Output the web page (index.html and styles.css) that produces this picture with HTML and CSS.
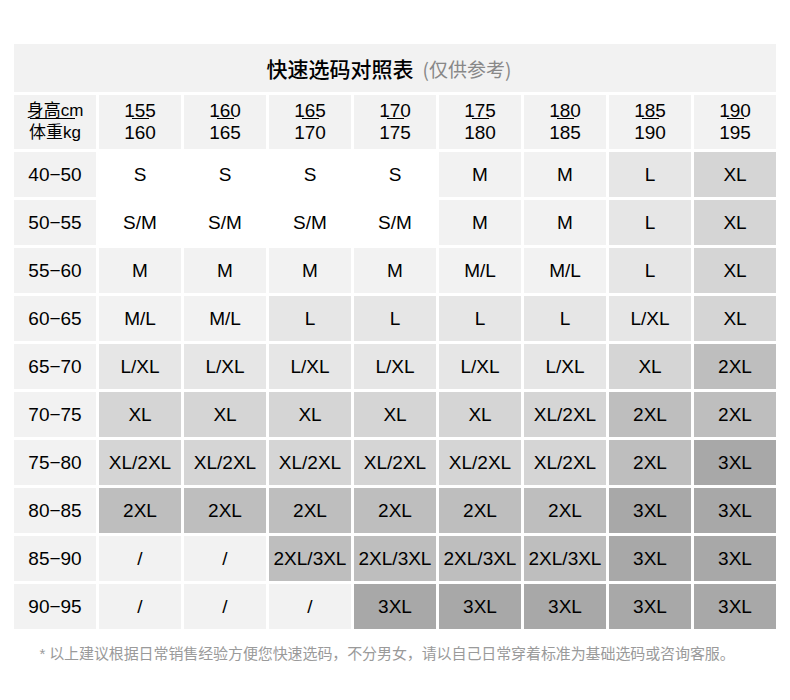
FILE: index.html
```html
<!DOCTYPE html>
<html lang="zh-CN">
<head>
<meta charset="utf-8">
<title>快速选码对照表</title>
<link rel="stylesheet" href="styles.css">
</head>
<body>
<div class="page">
  <div class="chart">
    <div class="title"><span class="title-main">快速选码对照表</span><span class="title-sub">(仅供参考)</span></div>

    <div class="cell c1 head"><div class="top label"><span>身高cm</span></div><div class="bottom label">体重kg</div></div>
    <div class="cell c1 head"><div class="top"><span>155</span></div><div class="bottom">160</div></div>
    <div class="cell c1 head"><div class="top"><span>160</span></div><div class="bottom">165</div></div>
    <div class="cell c1 head"><div class="top"><span>165</span></div><div class="bottom">170</div></div>
    <div class="cell c1 head"><div class="top"><span>170</span></div><div class="bottom">175</div></div>
    <div class="cell c1 head"><div class="top"><span>175</span></div><div class="bottom">180</div></div>
    <div class="cell c1 head"><div class="top"><span>180</span></div><div class="bottom">185</div></div>
    <div class="cell c1 head"><div class="top"><span>185</span></div><div class="bottom">190</div></div>
    <div class="cell c1 head"><div class="top"><span>190</span></div><div class="bottom">195</div></div>

    <div class="cell c1 wt">40−50</div>
    <div class="cell c0">S</div><div class="cell c0">S</div><div class="cell c0">S</div><div class="cell c0">S</div>
    <div class="cell c1">M</div><div class="cell c1">M</div><div class="cell c2">L</div><div class="cell c3">XL</div>

    <div class="cell c1 wt">50−55</div>
    <div class="cell c0">S/M</div><div class="cell c0">S/M</div><div class="cell c0">S/M</div><div class="cell c0">S/M</div>
    <div class="cell c1">M</div><div class="cell c1">M</div><div class="cell c2">L</div><div class="cell c3">XL</div>

    <div class="cell c1 wt">55−60</div>
    <div class="cell c1">M</div><div class="cell c1">M</div><div class="cell c1">M</div><div class="cell c1">M</div>
    <div class="cell c1">M/L</div><div class="cell c1">M/L</div><div class="cell c2">L</div><div class="cell c3">XL</div>

    <div class="cell c1 wt">60−65</div>
    <div class="cell c1">M/L</div><div class="cell c1">M/L</div><div class="cell c2">L</div><div class="cell c2">L</div>
    <div class="cell c2">L</div><div class="cell c2">L</div><div class="cell c2">L/XL</div><div class="cell c3">XL</div>

    <div class="cell c1 wt">65−70</div>
    <div class="cell c2">L/XL</div><div class="cell c2">L/XL</div><div class="cell c2">L/XL</div><div class="cell c2">L/XL</div>
    <div class="cell c2">L/XL</div><div class="cell c2">L/XL</div><div class="cell c3">XL</div><div class="cell c4">2XL</div>

    <div class="cell c1 wt">70−75</div>
    <div class="cell c3">XL</div><div class="cell c3">XL</div><div class="cell c3">XL</div><div class="cell c3">XL</div>
    <div class="cell c3">XL</div><div class="cell c3">XL/2XL</div><div class="cell c4">2XL</div><div class="cell c4">2XL</div>

    <div class="cell c1 wt">75−80</div>
    <div class="cell c3">XL/2XL</div><div class="cell c3">XL/2XL</div><div class="cell c3">XL/2XL</div><div class="cell c3">XL/2XL</div>
    <div class="cell c3">XL/2XL</div><div class="cell c3">XL/2XL</div><div class="cell c4">2XL</div><div class="cell c5">3XL</div>

    <div class="cell c1 wt">80−85</div>
    <div class="cell c4">2XL</div><div class="cell c4">2XL</div><div class="cell c4">2XL</div><div class="cell c4">2XL</div>
    <div class="cell c4">2XL</div><div class="cell c4">2XL</div><div class="cell c5">3XL</div><div class="cell c5">3XL</div>

    <div class="cell c1 wt">85−90</div>
    <div class="cell c1">/</div><div class="cell c1">/</div><div class="cell c4">2XL/3XL</div><div class="cell c4">2XL/3XL</div>
    <div class="cell c4">2XL/3XL</div><div class="cell c4">2XL/3XL</div><div class="cell c5">3XL</div><div class="cell c5">3XL</div>

    <div class="cell c1 wt">90−95</div>
    <div class="cell c1">/</div><div class="cell c1">/</div><div class="cell c1">/</div><div class="cell c5">3XL</div>
    <div class="cell c5">3XL</div><div class="cell c5">3XL</div><div class="cell c5">3XL</div><div class="cell c5">3XL</div>
  </div>
  <p class="note">* 以上建议根据日常销售经验方便您快速选码，不分男女，请以自己日常穿着标准为基础选码或咨询客服。</p>
</div>
</body>
</html>
```

FILE: styles.css
```css
html, body {
  margin: 0;
  padding: 0;
  background: #ffffff;
}

body {
  font-family: "Liberation Sans", "Noto Sans CJK SC", sans-serif;
  color: #000;
}

.page {
  width: 790px;
  padding-top: 44px;
}

.chart {
  margin-left: 14px;
  display: grid;
  grid-template-columns: repeat(9, 82px);
  grid-template-rows: 48px 54px repeat(10, 45px);
  gap: 3px;
}

.title {
  grid-column: 1 / -1;
  background: #f2f2f2;
  display: flex;
  align-items: center;
  justify-content: center;
  padding-right: 12px;
}

.title-main {
  font-family: "Noto Sans CJK SC", sans-serif;
  font-size: 21px;
  font-weight: 500;
  color: #000;
}

.title-sub {
  font-family: "Noto Sans CJK SC", sans-serif;
  font-size: 19px;
  color: #888888;
  margin-left: 9px;
}

.cell {
  display: flex;
  align-items: center;
  justify-content: center;
  font-size: 19px;
  color: #000;
}

.head {
  flex-direction: column;
}

.head .top,
.head .bottom {
  line-height: 22px;
  height: 22px;
  font-size: 19px;
}

.head .top span {
  position: relative;
  display: inline-block;
}

.head .top span::after {
  content: "";
  position: absolute;
  left: 50%;
  top: 18px;
  width: 17px;
  height: 1px;
  margin-left: -8px;
  background: #000;
}

.head .label {
  font-size: 17px;
}

.head .top.label span::after {
  width: 45px;
  margin-left: -25px;
}

.c0 { background: #ffffff; }
.c1 { background: #f2f2f2; }
.c2 { background: #e6e6e6; }
.c3 { background: #d5d5d5; }
.c4 { background: #bebebe; }
.c5 { background: #a8a8a8; }

.note {
  margin: 15px 0 0 0;
  padding-right: 16px;
  text-align: center;
  font-size: 15px;
  line-height: 20px;
  letter-spacing: -0.1px;
  color: #9a9a9a;
}
```
